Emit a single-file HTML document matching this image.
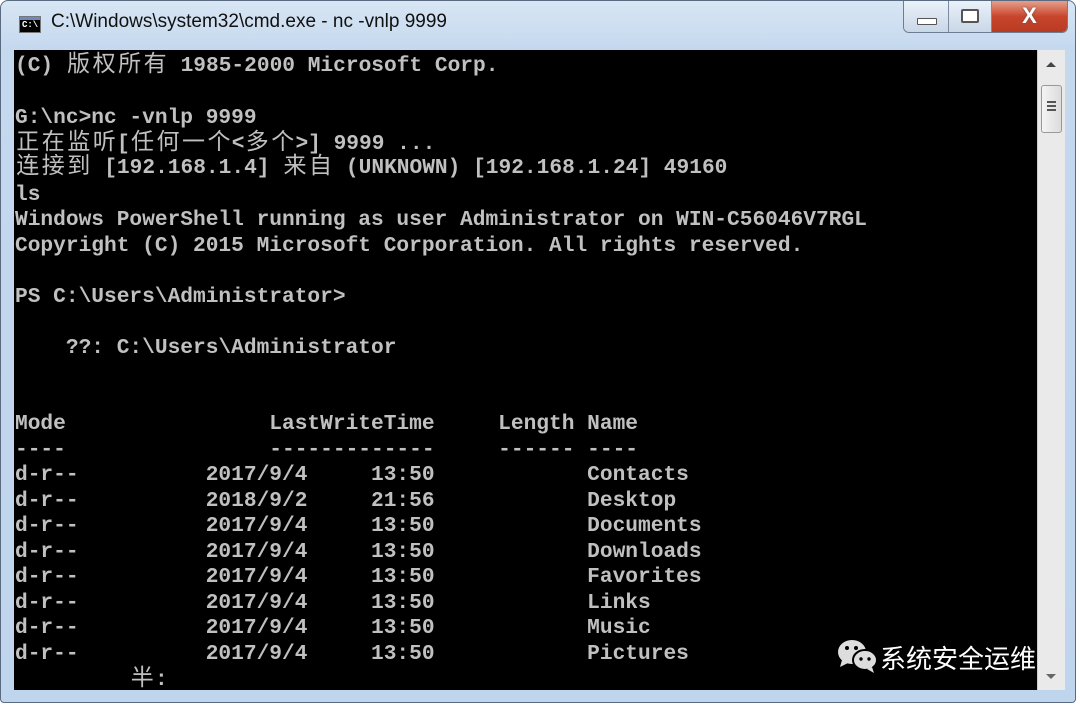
<!DOCTYPE html>
<html><head><meta charset="utf-8"><style>
body{margin:0;width:1080px;height:705px;overflow:hidden;background:#fff;position:relative;font-family:"Liberation Sans",sans-serif}
.win{position:absolute;left:0;top:0;width:1076px;height:703px;border-radius:8px 8px 4px 4px;background:linear-gradient(#d8e6f4,#c4d8ee 50px,#bfd5ed);border:1px solid #5a6a80;box-sizing:border-box}
.title{position:absolute;left:50px;top:10px;font-size:19px;color:#111}
.icon{position:absolute;left:18px;top:15px;width:22px;height:17px;background:#000;border:1px solid #777;box-sizing:border-box}
.icon:before{content:"";position:absolute;left:0;top:0;right:0;height:3px;background:#6a8ac0}
.icon span{position:absolute;left:2px;top:3px;color:#fff;font:bold 9px "Liberation Mono",monospace}
.btns{position:absolute;left:902px;top:0;height:31px;width:163px;border:1px solid #6d7c92;border-top:none;border-radius:0 0 6px 6px;overflow:hidden;display:flex}
.b{height:31px;background:linear-gradient(#eaf1f9,#c9d7e7);border-right:1px solid #7d8ba0;position:relative}
.x{background:linear-gradient(#e6a08c,#c8452c 50%,#b83a22);flex:1;color:#fff;font:bold 22px "Liberation Sans";text-align:center;line-height:29px;text-shadow:0 0 2px #555}
.con{position:absolute;left:14px;top:50px;width:1023px;height:640px;background:#000;overflow:hidden}
.in{position:absolute;left:0;top:5px;width:100%;height:100%}
.ln{position:absolute;left:1px;height:25.5px;white-space:pre;font:bold 21.2px/25.5px "Liberation Mono",monospace;color:#c0c0c0}
.c{display:inline-block;width:25.5px;font-family:"Noto Sans CJK SC",sans-serif;font-weight:normal;font-size:23px;line-height:20px;text-align:center}
.sb{position:absolute;left:1037px;top:50px;width:27px;height:640px;background:#eaeaea;border-left:1px solid #ccc}
.th{position:absolute;left:3px;top:35px;width:19px;height:46px;border:1px solid #999;border-radius:3px;background:linear-gradient(90deg,#f4f4f4,#dcdcdc)}
.wm{position:absolute;left:836px;top:638px;color:#fff;font-size:26px;font-family:"Noto Sans CJK SC",sans-serif}
</style></head><body>
<div class="win">
<div class="icon"><span>C:\</span></div>
<div class="title">C:\Windows\system32\cmd.exe - nc -vnlp 9999</div>
<div class="btns"><div class="b" style="width:44px"><div style="position:absolute;left:13px;top:17px;width:18px;height:5px;border:1px solid #555;background:#fff;border-radius:1px"></div></div><div class="b" style="width:42px"><div style="position:absolute;left:12px;top:8px;width:14px;height:10px;border:2px solid #555;background:#fff;border-radius:2px"></div></div><div class="x">X</div></div>
</div>
<div class="con"><div class="in">
<div class="ln" style="top:-4px">(C) <span class="c">版</span><span class="c">权</span><span class="c">所</span><span class="c">有</span> 1985-2000 Microsoft Corp.</div>
<div class="ln" style="top:51px">G:\nc&gt;nc -vnlp 9999</div>
<div class="ln" style="top:73.5px"><span class="c">正</span><span class="c">在</span><span class="c">监</span><span class="c">听</span>[<span class="c">任</span><span class="c">何</span><span class="c">一</span><span class="c">个</span>&lt;<span class="c">多</span><span class="c">个</span>&gt;] 9999 ...</div>
<div class="ln" style="top:98px"><span class="c">连</span><span class="c">接</span><span class="c">到</span> [192.168.1.4] <span class="c">来</span><span class="c">自</span> (UNKNOWN) [192.168.1.24] 49160</div>
<div class="ln" style="top:127.5px">ls</div>
<div class="ln" style="top:153px">Windows PowerShell running as user Administrator on WIN-C56046V7RGL</div>
<div class="ln" style="top:178.5px">Copyright (C) 2015 Microsoft Corporation. All rights reserved.</div>
<div class="ln" style="top:229.5px">PS C:\Users\Administrator&gt;</div>
<div class="ln" style="top:280.5px">    ??: C:\Users\Administrator</div>
<div class="ln" style="top:357px">Mode                LastWriteTime     Length Name</div>
<div class="ln" style="top:382.5px">----                -------------     ------ ----</div>
<div class="ln" style="top:408px">d-r--          2017/9/4     13:50            Contacts</div>
<div class="ln" style="top:433.5px">d-r--          2018/9/2     21:56            Desktop</div>
<div class="ln" style="top:459px">d-r--          2017/9/4     13:50            Documents</div>
<div class="ln" style="top:484.5px">d-r--          2017/9/4     13:50            Downloads</div>
<div class="ln" style="top:510px">d-r--          2017/9/4     13:50            Favorites</div>
<div class="ln" style="top:535.5px">d-r--          2017/9/4     13:50            Links</div>
<div class="ln" style="top:561px">d-r--          2017/9/4     13:50            Music</div>
<div class="ln" style="top:586.5px">d-r--          2017/9/4     13:50            Pictures</div>
<div class="ln" style="top:610px">         <span class="c">半</span>:</div>
</div></div>
<div class="sb"><div style="position:absolute;left:8px;top:12px;border:5px solid transparent;border-bottom:5px solid #444;border-top:none"></div><div class="th"><div style="position:absolute;left:5px;top:15px;width:9px;height:12px;background:repeating-linear-gradient(#555 0 2px,transparent 2px 4px)"></div></div><div style="position:absolute;left:8px;top:624px;border:5px solid transparent;border-top:5px solid #666;border-bottom:none"></div></div>
<div class="wm"><svg width="44" height="36" viewBox="0 0 44 36" style="vertical-align:-6px"><ellipse cx="16" cy="14" rx="14" ry="12" fill="#ddd"/><path d="M6 22l-2 7 8-4z" fill="#ddd"/><ellipse cx="29" cy="22" rx="12" ry="10" fill="#ddd" stroke="#000" stroke-width="2"/><path d="M36 29l2 6-7-4z" fill="#ddd"/><circle cx="11" cy="10" r="2" fill="#000"/><circle cx="20" cy="10" r="2" fill="#000"/><circle cx="25" cy="21" r="1.7" fill="#000"/><circle cx="33" cy="21" r="1.7" fill="#000"/></svg>系统安全运维</div>
</body></html>
